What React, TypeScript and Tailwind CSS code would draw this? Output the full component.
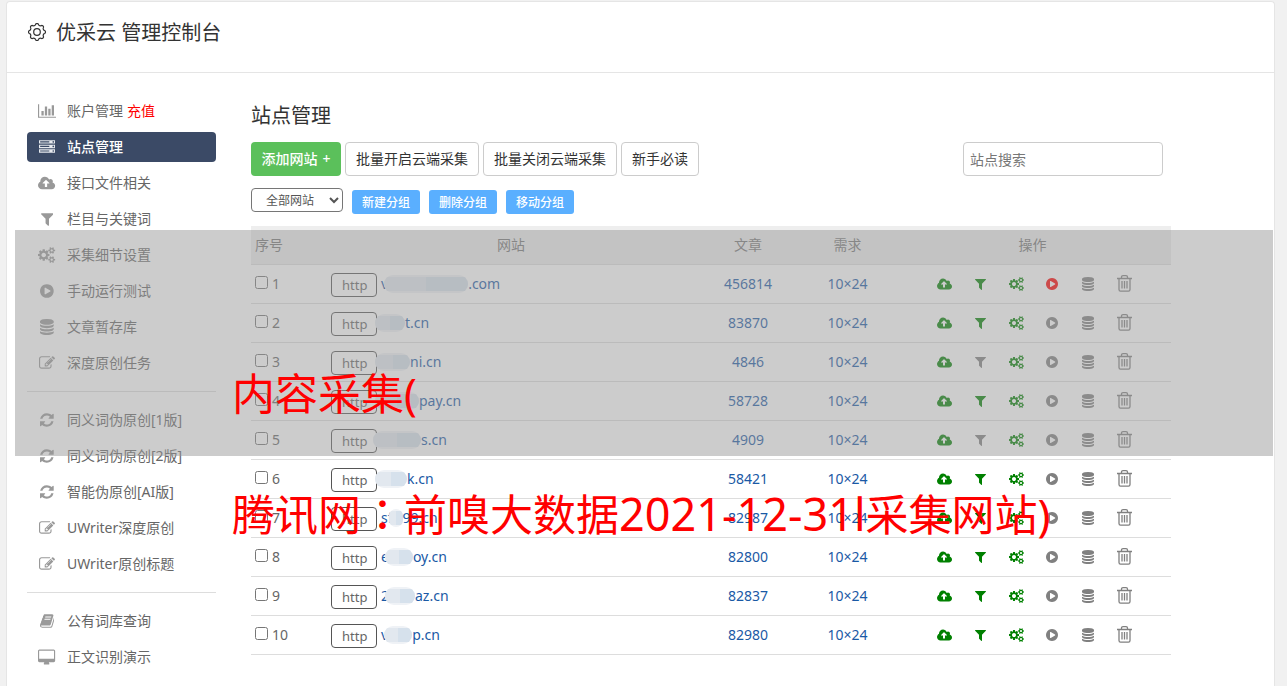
import clsx from "clsx";

const glyphs = {
  chart: {
    box: "0 0 2048 1792",
    d: "M640 896v512H384V896h256zm384-512v1024H768V384h256zm1024 1152v128H0V128h128v1408h1920zM1408 640v768h-256V640h256zm384-384v1152h-256V256h256z",
  },
  server: {
    box: "0 0 1792 1792",
    d: "M128 1408h1024v-128H128v128zm0-512h1024V768H128v128zm1568 448q0-40-28-68t-68-28-68 28-28 68 28 68 68 28 68-28 28-68zM128 384h1024V256H128v128zm1568 448q0-40-28-68t-68-28-68 28-28 68 28 68 68 28 68-28 28-68zm0-512q0-40-28-68t-68-28-68 28-28 68 28 68 68 28 68-28 28-68zm96 832v384H0v-384h1792zm0-512v384H0V640h1792zm0-512v384H0V128h1792z",
  },
  cloud: {
    box: "0 -192 1920 1792",
    d: "M1280 736q0-14-9-23L919 361q-9-9-23-9t-23 9L522 712q-10 12-10 24 0 14 9 23t23 9h224v352q0 13 9.5 22.5t22.5 9.5h192q13 0 22.5-9.5t9.5-22.5V768h224q13 0 22.5-9.5t9.5-22.5zm640 288q0 159-112.5 271.5T1536 1408H448q-185 0-316.5-131.5T0 960q0-130 70-240t188-165q-2-30-2-43 0-212 150-362T768 0q156 0 285.5 87T1242 318q71-62 166-62 106 0 181 75t75 181q0 76-41 138 130 31 213.500 135.500T1920 1024z",
  },
  filter: {
    box: "0 -256 1408 1792",
    d: "M1403 39q17 41-14 70L896 602v742q0 42-39 59-13 5-25 5-27 0-45-19l-256-256q-19-19-19-45V602L19 109q-31-29-14-70Q22 0 64 0h1280q42 0 59 39z",
  },
  cogs: {
    box: "0 0 1920 1792",
    d: "M896 896q0-106-75-181t-181-75-181 75-75 181 75 181 181 75 181-75 75-181zm768 512q0-52-38-90t-90-38-90 38-38 90q0 53 37.5 90.5t90.5 37.5 90.5-37.5 37.5-90.5zm0-1024q0-52-38-90t-90-38-90 38-38 90q0 53 37.5 90.5t90.5 37.5 90.5-37.5T1664 384zm-384 421v185q0 10-7 19.5t-16 10.5l-155 24q-11 35-32 76 34 48 90 115 7 11 7 20 0 12-7 19-23 30-82.5 89.5t-78.5 59.5q-11 0-21-7l-115-90q-37 19-77 31-11 108-23 155-7 24-30 24H547q-11 0-20-7.5t-10-17.5l-23-153q-34-10-75-31l-118 89q-7 7-20 7-11 0-21-8-144-133-144-160 0-9 7-19 10-14 41-53t47-61q-23-44-35-82l-152-24q-10-1-17-9.5T0 987V802q0-10 7-19.5T23 772l155-24q11-35 32-76-34-48-90-115-7-11-7-20 0-12 7-20 22-30 82-89t79-59q11 0 21 7l115 90q34-18 77-32 11-108 23-154 7-24 30-24h186q11 0 20 7.5t10 17.5l23 153q34 10 75 31l118-89q8-7 20-7 11 0 21 8 144 133 144 160 0 8-7 19-12 16-42 54t-45 60q23 48 34 82l152 23q10 2 17 10.5t7 19.5zm640 533v140q0 16-149 31-12 27-30 52 51 113 51 138 0 4-4 7-122 71-124 71-8 0-46-47t-52-68q-20 2-30 2t-30-2q-14 21-52 68t-46 47q-2 0-124-71-4-3-4-7 0-25 51-138-18-25-30-52-149-15-149-31v-140q0-16 149-31 13-29 30-52-51-113-51-138 0-4 4-7 4-2 35-20t59-34 30-16q8 0 46 46.5t52 67.5q20-2 30-2t30 2q51-71 92-112l6-2q4 0 124 70 4 3 4 7 0 25-51 138 17 23 30 52 149 15 149 31zm0-1024v140q0 16-149 31-12 27-30 52 51 113 51 138 0 4-4 7-122 71-124 71-8 0-46-47t-52-68q-20 2-30 2t-30-2q-14 21-52 68t-46 47q-2 0-124-71-4-3-4-7 0-25 51-138-18-25-30-52-149-15-149-31V314q0-16 149-31 13-29 30-52-51-113-51-138 0-4 4-7 4-2 35-20t59-34 30-16q8 0 46 46.5t52 67.5q20-2 30-2t30 2q51-71 92-112l6-2q4 0 124 70 4 3 4 7 0 25-51 138 17 23 30 52 149 15 149 31z",
  },
  play: {
    box: "0 -128 1536 1792",
    d: "M768 0q209 0 385.5 103T1433 382.5 1536 768t-103 385.5-279.5 279.5T768 1536t-385.5-103T103 1153.5 0 768t103-385.5T382.5 103 768 0zm384 823q32-18 32-55t-32-55L608 393q-31-19-64-1-32 19-32 56v640q0 37 32 56 16 8 32 8 17 0 32-9z",
  },
  database: {
    box: "0 0 1536 1792",
    d: "M768 768q237 0 443-43t325-127v170q0 69-103 128t-280 93.5-385 34.5-385-34.5T103 896 0 768V598q119 84 325 127t443 43zm0 768q237 0 443-43t325-127v170q0 69-103 128t-280 93.5-385 34.5-385-34.5-280-93.5T0 1536v-170q119 84 325 127t443 43zm0-384q237 0 443-43t325-127v170q0 69-103 128t-280 93.5-385 34.5-385-34.5-280-93.5T0 1152V982q119 84 325 127t443 43zM768 0q208 0 385 34.5t280 93.5 103 128v128q0 69-103 128t-280 93.5T768 640t-385-34.5T103 512 0 384V256q0-69 103-128t280-93.5T768 0z",
  },
  edit: {
    box: "0 0 1792 1792",
    d: "M888 1184l116-116-152-152-116 116v56h96v96h56zm440-720q-16-16-33 1l-350 350q-17 17-1 33t33-1l350-350q17-17 1-33zm80 594v190q0 119-84.5 203.5t-203.5 84.5h-832q-119 0-203.5-84.5t-84.5-203.5v-832q0-119 84.5-203.5t203.5-84.5h832q63 0 117 25 15 7 18 23 3 17-9 29l-49 49q-14 14-32 8-23-6-45-6h-832q-66 0-113 47t-47 113v832q0 66 47 113t113 47h832q66 0 113-47t47-113v-126q0-13 9-22l64-64q15-15 35-7t20 29zm-96-738l288 288-672 672h-288v-288zm444 132l-92 92-288-288 92-92q28-28 68-28t68 28l152 152q28 28 28 68t-28 68z",
  },
  refresh: {
    box: "0 -128 1536 1792",
    d: "M1511 928q0 5-1 7q-64 268-268 434.5T764 1536q-146 0-282.5-55T238 1324l-129 129q-19 19-45 19t-45-19t-19-45V960q0-26 19-45t45-19h448q26 0 45 19t19 45t-19 45l-137 137q71 66 161 102t187 36q134 0 250-65t186-179q11-17 53-117q8-23 30-23h192q13 0 22.5 9.5t9.5 22.5zm25-800v448q0 26-19 45t-45 19h-448q-26 0-45-19t-19-45t19-45l138-138Q969 256 768 256q-134 0-250 65T332 500q-11 17-53 117q-8 23-30 23H50q-13 0-22.5-9.5T18 608v-7q65-268 270-434.5T768 0q146 0 284 55.5T1297 212l130-129q19-19 45-19t45 19t19 45z",
  },
  book: {
    box: "0 0 1664 1792",
    d: "M1639 478q40 57 18 129l-275 906q-19 64-76.5 107.5T1183 1664H260q-77 0-148.5-53.5T12 1479q-24-67-2-127 0-4 3-27t4-37q1-8-3-21.5t-3-19.5q2-11 8-21t16.5-23.5T52 1179q23-38 45-91.5t30-91.5q3-10 .5-30t-.5-28q3-11 17-28t17-23q21-36 42-92t25-90q1-9-2.5-32t.5-28q4-13 22-30.5t22-22.5q19-26 42.5-84.5T340 411q1-8-3-25.5t-2-26.5q2-8 9-18t18-23 17-21q8-12 16.5-30.5t15-35 16-36 19.5-32T469.5 140t36-11.5T553 134l-1 3q38-9 51-9h761q74 0 114 56t18 130l-274 906q-36 119-71.5 153.500T1022 1408H153q-27 0-38 15-11 16-1 43 24 70 144 70h923q29 0 56-15.5t35-41.5l300-987q7-22 5-57 38 15 59 43zm-1064 2q-4 13 2 22.5t20 9.500h608q13 0 25.500-9.500T1247 480l21-64q4-13-2-22.500t-20-9.500H638q-13 0-25.500 9.500T596 416zm-83 256q-4 13 2 22.500t20 9.500h608q13 0 25.500-9.500T1164 736l21-64q4-13-2-22.500t-20-9.500H555q-13 0-25.500 9.500T513 672z",
  },
  desktop: {
    box: "0 -64 1920 1792",
    d: "M1792 992V160q0-13-9.5-22.5T1760 128H160q-13 0-22.5 9.5T128 160v832q0 13 9.5 22.5t22.500 9.500h1600q13 0 22.500-9.500t9.500-22.500zm128-832v1088q0 66-47 113t-113 47h-544q0 37 16 77.500t32 71 16 43.500q0 26-19 45t-45 19H704q-26 0-45-19t-19-45q0-14 16-44t32-70 16-78H160q-66 0-113-47T0 1248V160Q0 94 47 47T160 0h1600q66 0 113 47t47 113z",
  },
};

type GlyphName = keyof typeof glyphs;

function Glyph({ name, className }: { name: GlyphName; className: string }) {
  return (
    <svg
      aria-hidden="true"
      className={clsx("w-auto shrink-0 fill-current", className)}
      viewBox={glyphs[name].box}
    >
      <path d={glyphs[name].d} />
    </svg>
  );
}

function Trash() {
  return (
    <svg
      aria-hidden="true"
      className="h-[17px] w-[15px] fill-none stroke-current"
      viewBox="0 0 15 17"
    >
      <path
        d="M0 3.500h15M4.500 3.500V2Q4.500 .7 6 .7h3q1.500 0 1.500 1.300v1.500M2 3.500V14.500q0 1.700 1.500 1.700h8q1.500 0 1.500-1.700V3.500M5 6v7.500M7.500 6v7.500M10 6v7.500"
        strokeWidth="1.300"
      />
    </svg>
  );
}

// outline with eight soft teeth
const gearPoints = Array.from({ length: 96 }, (_, i) => {
  const angle = (i / 96) * Math.PI * 2;
  const wave = Math.cos(angle * 8);
  const radius = 7.7 + 0.8 * Math.sign(wave) * Math.sqrt(Math.abs(wave));
  return `${(9 + radius * Math.cos(angle)).toFixed(2)},${(9 + radius * Math.sin(angle)).toFixed(2)}`;
}).join(" ");

function Gear() {
  return (
    <svg
      aria-hidden="true"
      className="mt-[5px] ml-px size-[18px] shrink-0 fill-none stroke-current"
      viewBox="0 0 18 18"
      strokeLinejoin="round"
    >
      <polygon points={gearPoints} strokeWidth="1.200" />
      <circle cx="9" cy="9" r="3.300" strokeWidth="1.200" />
    </svg>
  );
}

type MenuItem = { icon: GlyphName; text: string; badge?: string };

const menu: MenuItem[][] = [
  [
    { icon: "chart", text: "账户管理", badge: "充值" },
    { icon: "server", text: "站点管理" },
    { icon: "cloud", text: "接口文件相关" },
    { icon: "filter", text: "栏目与关键词" },
    { icon: "cogs", text: "采集细节设置" },
    { icon: "play", text: "手动运行测试" },
    { icon: "database", text: "文章暂存库" },
    { icon: "edit", text: "深度原创任务" },
  ],
  [
    { icon: "refresh", text: "同义词伪原创[1版]" },
    { icon: "refresh", text: "同义词伪原创[2版]" },
    { icon: "refresh", text: "智能伪原创[AI版]" },
    { icon: "edit", text: "UWriter深度原创" },
    { icon: "edit", text: "UWriter原创标题" },
  ],
  [
    { icon: "book", text: "公有词库查询" },
    { icon: "desktop", text: "正文识别演示" },
  ],
];

// mask: the blurred part of the domain, between head and tail
const sites = [
  { head: "v", mask: "w-[84px] -ml-1", tail: ".com", count: 456814 },
  { head: "", mask: "w-[30px] -ml-1.5", tail: "t.cn", count: 83870 },
  { head: "", mask: "w-[35px] -ml-1.5", tail: "ni.cn", count: 4846 },
  { head: "", mask: "w-11 -ml-1.5", tail: "pay.cn", count: 58728 },
  { head: "", mask: "w-12 -ml-2", tail: "s.cn", count: 4909 },
  { head: "", mask: "w-8 -ml-1.5", tail: "k.cn", count: 58421 },
  { head: "sf", mask: "w-3.5 -ml-1", tail: "99.cn", count: 82987 },
  { head: "e", mask: "w-7 -ml-1", tail: "oy.cn", count: 82800 },
  { head: "2", mask: "w-[30px] -ml-1", tail: "az.cn", count: 82837 },
  { head: "v", mask: "w-7 -ml-1", tail: "p.cn", count: 82980 },
];

function Sidebar() {
  return (
    <nav className="w-[189px] shrink-0">
      {menu.map((group, i) => (
        <ul
          key={i}
          className={clsx(
            "flex flex-col gap-1.5",
            i > 0 && "mt-[13px] border-t border-[#ddd] pt-[13px]"
          )}
        >
          {group.map((item) => (
            <li key={item.text}>
              <a
                href="#"
                className={clsx(
                  "flex h-[30px] items-center rounded pl-2.5",
                  item.text === "站点管理"
                    ? "bg-[#3b4a66] font-medium text-white"
                    : "text-[#666]"
                )}
              >
                <span
                  className={clsx(
                    "mr-2.5 flex w-5 justify-center",
                    item.text === "站点管理" ? "text-[#e6e9ee]" : "text-[#999]"
                  )}
                >
                  <Glyph name={item.icon} className="h-4" />
                </span>
                {item.text}
                {item.badge && (
                  <span className="ml-1 text-[#f00]">{item.badge}</span>
                )}
              </a>
            </li>
          ))}
        </ul>
      ))}
    </nav>
  );
}

function Toolbar() {
  const outline =
    "h-[34px] rounded border border-[#ccc] bg-white px-2.5 text-[#333]";
  const small =
    "h-6 w-[68px] rounded-[3px] bg-[#5aafff] pt-0.5 text-xs font-medium text-white";

  return (
    <>
      <div className="mt-[11px] flex items-center gap-1 pr-2">
        <button className="flex h-[34px] w-[90px] items-center justify-center gap-[5px] rounded bg-[#5bc05b] font-medium text-white">
          添加网站 <span>+</span>
        </button>
        <button className={outline}>批量开启云端采集</button>
        <button className={outline}>批量关闭云端采集</button>
        <button className={outline}>新手必读</button>
        <input
          type="text"
          aria-label="站点搜索"
          placeholder="站点搜索"
          className="ml-auto h-[34px] w-[200px] rounded border border-[#ccc] px-1.5 placeholder:text-[#777]"
        />
      </div>
      <div className="mt-3 flex items-start gap-[9px]">
        <select
          aria-label="网站分组"
          className="h-6 w-[92px] rounded border border-[#767676] bg-white pl-2.5 text-xs text-[#555]"
        >
          <option>全部网站</option>
        </select>
        <div className="flex gap-[9px] pt-0.5">
          <button className={small}>新建分组</button>
          <button className={small}>删除分组</button>
          <button className={small}>移动分组</button>
        </div>
      </div>
    </>
  );
}

function SiteTable() {
  const action = "flex w-9 justify-center";

  return (
    <table className="mt-3 w-full table-fixed border-collapse">
      <colgroup>
        <col className="w-[76px]" />
        <col />
        <col className="w-[106px]" />
        <col className="w-[93px]" />
        <col className="w-[277px]" />
      </colgroup>
      <thead>
        <tr className="h-[38px] border-b border-[#ddd] bg-[#eee] text-[#777]">
          <th className="pl-1 text-left font-normal">序号</th>
          <th className="font-normal">网站</th>
          <th className="font-normal">文章</th>
          <th className="font-normal">需求</th>
          <th className="font-normal">操作</th>
        </tr>
      </thead>
      <tbody>
        {sites.map((site, i) => (
          <tr key={i} className="h-[39px] border-b border-[#ddd]">
            <td className="pl-1">
              <label className="flex items-center gap-1">
                <input type="checkbox" className="mb-0.5 size-[13px]" />
                {i + 1}
              </label>
            </td>
            <td className="pl-1">
              <div className="flex items-center">
                <select
                  aria-label="协议"
                  className="mt-0.5 h-6 w-[46px] appearance-none rounded border border-[#555] pt-0.5 pl-2.5 text-[13px] text-[#666]"
                >
                  <option>http</option>
                  <option>https</option>
                </select>
                <a href="#" className="ml-1 flex items-center text-[#1a59a5]">
                  {site.head}
                  <span
                    className={clsx(
                      "flex h-[18px] overflow-hidden rounded-full bg-[#eff2f6]",
                      site.mask
                    )}
                  >
                    <span className="mt-0.5 h-3.5 w-1/2 bg-[#e2e8ef]" />
                    <span className="mt-0.5 h-3.5 w-1/2 bg-[#d6e1ec]" />
                  </span>
                  {site.tail}
                </a>
              </div>
            </td>
            <td className="text-center">
              <a href="#" className="text-[#1a59a5]">
                {site.count}
              </a>
            </td>
            <td className="text-center">
              <a href="#" className="text-[#1a59a5]">
                10×24
              </a>
            </td>
            <td className="pl-8">
              <div className="flex items-center text-[#808080]">
                <a href="#" aria-label="接口" className={clsx(action, "text-[#008000]")}>
                  <Glyph name="cloud" className="h-3.5" />
                </a>
                <a
                  href="#"
                  aria-label="关键词"
                  className={clsx(action, i !== 2 && i !== 4 && "text-[#008000]")}
                >
                  <Glyph name="filter" className="h-3.5" />
                </a>
                <a href="#" aria-label="设置" className={clsx(action, "text-[#008000]")}>
                  <Glyph name="cogs" className="h-3.5" />
                </a>
                <a
                  href="#"
                  aria-label="运行"
                  className={clsx(action, i === 0 && "text-[#f00]")}
                >
                  <Glyph name="play" className="h-3.5" />
                </a>
                <a href="#" aria-label="暂存库" className={action}>
                  <Glyph name="database" className="h-3.5" />
                </a>
                <a href="#" aria-label="删除" className={action}>
                  <Trash />
                </a>
              </div>
            </td>
          </tr>
        ))}
      </tbody>
    </table>
  );
}

export default function App() {
  return (
    <div className="relative flex min-h-screen flex-col overflow-hidden bg-[#f1f1f1] pt-px pr-3 pl-1.5 font-['Noto_Sans','Noto_Sans_CJK_SC',sans-serif] text-sm text-[#666]">
      <div className="grow rounded-t border border-b-0 border-[#e5e5e5] bg-white">
        <header className="flex h-[71px] items-start gap-2.5 border-b border-[#e5e5e5] px-5 pt-4 text-[#333]">
          <Gear />
          <h1 className="text-xl leading-[30px]">优采云 管理控制台</h1>
        </header>
        <div className="flex gap-[35px] pt-[23px] pr-[103px] pl-5">
          <Sidebar />
          <main className="min-w-0 grow pt-[5px]">
            <h2 className="text-xl leading-[30px] text-[#333]">站点管理</h2>
            <Toolbar />
            <SiteTable />
          </main>
        </div>
      </div>

      <div className="pointer-events-none absolute top-[230px] right-3.5 left-[15px] h-[226px] bg-[#979797]/49" />
      <div className="pointer-events-none absolute top-[335px] left-[232px] text-[43px] leading-[118px] whitespace-nowrap text-[#f00]">
        <p>内容采集(</p>
        <p>
          腾讯网
          <span className="font-['Noto_Sans_CJK_TC',sans-serif]">：</span>
          前嗅大数据
          <span className="text-[45px]">2021-12-31l</span>
          采集网站)
        </p>
      </div>
    </div>
  );
}
